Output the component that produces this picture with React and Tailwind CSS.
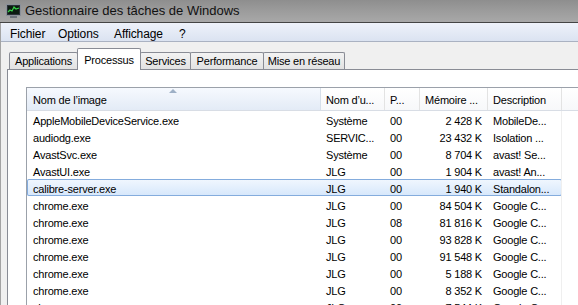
import React from "react";

const rows = [
  ["AppleMobileDeviceService.exe", "Système", "00", "2 428 K", "MobileDe..."],
  ["audiodg.exe", "SERVIC...", "00", "23 432 K", "Isolation ..."],
  ["AvastSvc.exe", "Système", "00", "8 704 K", "avast! Se..."],
  ["AvastUI.exe", "JLG", "00", "1 904 K", "avast! An..."],
  ["calibre-server.exe", "JLG", "00", "1 940 K", "Standalon..."],
  ["chrome.exe", "JLG", "00", "84 504 K", "Google C..."],
  ["chrome.exe", "JLG", "08", "81 816 K", "Google C..."],
  ["chrome.exe", "JLG", "00", "93 828 K", "Google C..."],
  ["chrome.exe", "JLG", "00", "91 548 K", "Google C..."],
  ["chrome.exe", "JLG", "00", "5 188 K", "Google C..."],
  ["chrome.exe", "JLG", "00", "8 352 K", "Google C..."],
  ["chrome.exe", "JLG", "00", "7 544 K", "Google C..."],
];

function TitleIcon() {
  return (
    <svg width="15" height="14" viewBox="0 0 15 14" className="shrink-0">
      <rect x="0.5" y="0.5" width="14" height="11" fill="#2a2f36" stroke="#8a9099" />
      <rect x="2" y="2" width="11" height="8" fill="#0b1a10" />
      <polyline points="2,8 4,6 6,7 8,3 10,5 13,4" fill="none" stroke="#37d24a" strokeWidth="1.2" />
      <rect x="4" y="12" width="7" height="2" fill="#6b7079" />
    </svg>
  );
}

function Tab({ label, w, selected, first }) {
  if (selected) {
    return (
      <div
        className={`relative z-10 -mb-px -ml-px h-[22px] ${w} bg-white border-x border-t border-[#898c95] flex items-start justify-center pt-[3px] rounded-t-[2px]`}
      >
        {label}
      </div>
    );
  }
  return (
    <div
      className={`${first ? "" : "-ml-px"} h-[17px] ${w} bg-gradient-to-b from-[#f3f3f3] to-[#e2e2e2] border-x border-t border-[#898c95] flex items-center justify-center rounded-t-[2px]`}
    >
      {label}
    </div>
  );
}

function Row({ r, selected }) {
  return (
    <div
      className={`flex h-[17px] w-[535px] items-center pt-[4px] ${
        selected
          ? "bg-gradient-to-b from-[#f1f7fe] to-[#d6e7fb] shadow-[inset_0_0_0_1px_#84acdd] rounded-[2px]"
          : ""
      }`}
    >
      <div className="w-[294px] pl-[6px] whitespace-nowrap">{r[0]}</div>
      <div className="w-[64px] pl-[5px] whitespace-nowrap">{r[1]}</div>
      <div className="w-[35px] pl-[5px]">{r[2]}</div>
      <div className="w-[68px] pr-[6px] text-right whitespace-nowrap">{r[3]}</div>
      <div className="w-[74px] pl-[5px] whitespace-nowrap">{r[4]}</div>
    </div>
  );
}

export default function App() {
  return (
    <div className="w-[578px] h-[305px] overflow-hidden bg-[#f0f0f0] flex flex-col font-['Liberation_Sans',Arial,sans-serif] text-[11px] text-black tracking-[-0.2px]">
      {/* Title bar */}
      <div className="h-[22px] shrink-0 bg-gradient-to-b from-[#8e8e8e] via-[#9c9c9c] to-[#a8a8a8] flex items-center pl-[6px] gap-[4px]">
        <TitleIcon />
        <span className="text-[13px] tracking-normal text-[#111]">Gestionnaire des tâches de Windows</span>
      </div>
      <div className="h-px shrink-0 bg-[#444]" />
      <div className="flex-1 flex flex-col border-l border-[#a3a3a3]">
        {/* Menu bar */}
        <div className="h-[19px] shrink-0 border-b border-[#aab2c2] bg-gradient-to-b from-[#eef2fa] to-[#dbe3f1] flex items-center pl-[9px] pt-[4px] text-[12px] tracking-[-0.1px]">
          <span className="w-[48px]">Fichier</span>
          <span className="w-[56px]">Options</span>
          <span className="w-[65px]">Affichage</span>
          <span>?</span>
        </div>
        {/* Body */}
        <div className="flex-1 flex flex-col pl-[6px] pt-[6px]">
          <div className="flex items-end pl-[2px] shrink-0">
            <Tab label="Applications" w="w-[69px]" first />
            <Tab label="Processus" w="w-[64px]" selected />
            <Tab label="Services" w="w-[51px]" />
            <Tab label="Performance" w="w-[74px]" />
            <Tab label="Mise en réseau" w="w-[82px]" />
          </div>
          <div className="flex-1 bg-white border-l border-t border-[#898c95] pt-[17px] pl-[18px]">
            <div className="border-l border-t border-[#9ba1aa] w-[560px] h-[260px] bg-white">
              {/* Header */}
              <div className="flex h-[23px] border-b border-[#d8dde5]">
                <div className="relative w-[294px] border-r border-[#d6dfea] bg-gradient-to-b from-[#f6f9fe] to-[#e3ebf6] flex items-center pl-[6px] pt-[2px]">
                  <svg width="8" height="4" viewBox="0 0 8 4" className="absolute left-[142px] top-[1px]">
                    <polygon points="0,4 4,0 8,4" fill="#9eb0c6" />
                  </svg>
                  Nom de l’image
                </div>
                <div className="w-[64px] border-r border-[#e3e3e3] bg-gradient-to-b from-white to-[#f7f8fa] flex items-center pl-[5px] pt-[2px] whitespace-nowrap">
                  Nom d’u...
                </div>
                <div className="w-[35px] border-r border-[#e3e3e3] bg-gradient-to-b from-white to-[#f7f8fa] flex items-center pl-[5px] pt-[2px]">
                  P...
                </div>
                <div className="w-[68px] border-r border-[#e3e3e3] bg-gradient-to-b from-white to-[#f7f8fa] flex items-center pl-[5px] pt-[2px] whitespace-nowrap">
                  Mémoire ...
                </div>
                <div className="w-[74px] border-r border-[#e3e3e3] bg-gradient-to-b from-white to-[#f7f8fa] flex items-center pl-[5px] pt-[2px]">
                  Description
                </div>
                <div className="flex-1 bg-gradient-to-b from-white to-[#f7f8fa]" />
              </div>
              {/* Rows */}
              <div className="relative">
                <div className="absolute left-[534px] top-0 h-[220px] w-px bg-[#efefef]" />
                {rows.map((r, i) => (
                  <Row key={i} r={r} selected={i === 4} />
                ))}
              </div>
            </div>
          </div>
        </div>
      </div>
    </div>
  );
}
